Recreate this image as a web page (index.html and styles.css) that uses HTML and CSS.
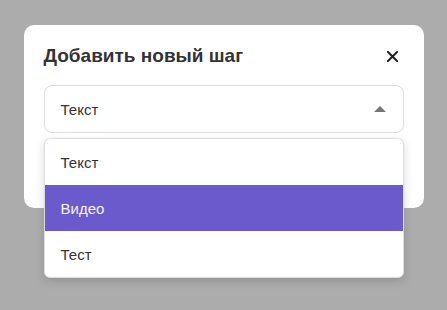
FILE: index.html
```html
<!DOCTYPE html>
<html lang="ru">
<head>
    <meta charset="UTF-8">
    <meta name="viewport" content="width=device-width, initial-scale=1.0">
    <title>Добавить новый шаг</title>
    <link rel="stylesheet" href="styles.css">
</head>
<body>
    <div class="modal">
        <div class="modal-header">
            <h2 class="modal-title">Добавить новый шаг</h2>
            <button class="modal-close" aria-label="Закрыть">
                <svg width="11" height="11" viewBox="0 0 11 11">
                    <path d="M1 1 L10 10 M10 1 L1 10" stroke="#222" stroke-width="2" stroke-linecap="square"/>
                </svg>
            </button>
        </div>

        <div class="select">
            <div class="select-value">
                <span>Текст</span>
                <span class="select-arrow"></span>
            </div>
            <ul class="select-menu">
                <li class="select-option">Текст</li>
                <li class="select-option active">Видео</li>
                <li class="select-option">Тест</li>
            </ul>
        </div>
    </div>
</body>
</html>
```

FILE: styles.css
```css
body {
    font-family: "Liberation Sans", Arial, sans-serif;
    background: #acacac;
    margin: 0;
    height: 100vh;
    display: flex;
    justify-content: center;
    align-items: flex-start;
    padding-top: 25px;
    box-sizing: border-box;
}

.modal {
    width: 400px;
    height: 183px;
    box-sizing: border-box;
    background: #fff;
    border-radius: 10px;
    padding: 20px 20px;
}

.modal-header {
    display: flex;
    justify-content: space-between;
    align-items: center;
    height: 22px;
    margin-bottom: 18px;
}

.modal-title {
    margin: 0;
    font-size: 19px;
    font-weight: bold;
    color: #333;
}

.modal-close {
    background: none;
    border: none;
    padding: 0;
    margin-right: 6px;
    display: flex;
    cursor: pointer;
}

.select {
    position: relative;
}

.select-value {
    height: 48px;
    box-sizing: border-box;
    border: 1px solid #ddd;
    border-radius: 8px;
    display: flex;
    justify-content: space-between;
    align-items: center;
    padding: 0 17px 0 16px;
    font-size: 15px;
    color: #333;
}

/* стрелка вверх, меню открыто */
.select-arrow {
    width: 0;
    height: 0;
    border-left: 6px solid transparent;
    border-right: 6px solid transparent;
    border-bottom: 6px solid #777;
}

.select-menu {
    position: absolute;
    top: 53px;
    left: 0;
    right: 0;
    margin: 0;
    padding: 0;
    list-style: none;
    background: #fff;
    border: 1px solid #ddd;
    border-radius: 6px;
    overflow: hidden;
    box-shadow: 0 3px 10px rgba(0, 0, 0, 0.15);
}

.select-option {
    height: 46px;
    display: flex;
    align-items: center;
    padding-left: 16px;
    font-size: 15px;
    color: #333;
}

.select-option.active {
    background: #6b5acb;
    color: #f4f2ff;
}
```
